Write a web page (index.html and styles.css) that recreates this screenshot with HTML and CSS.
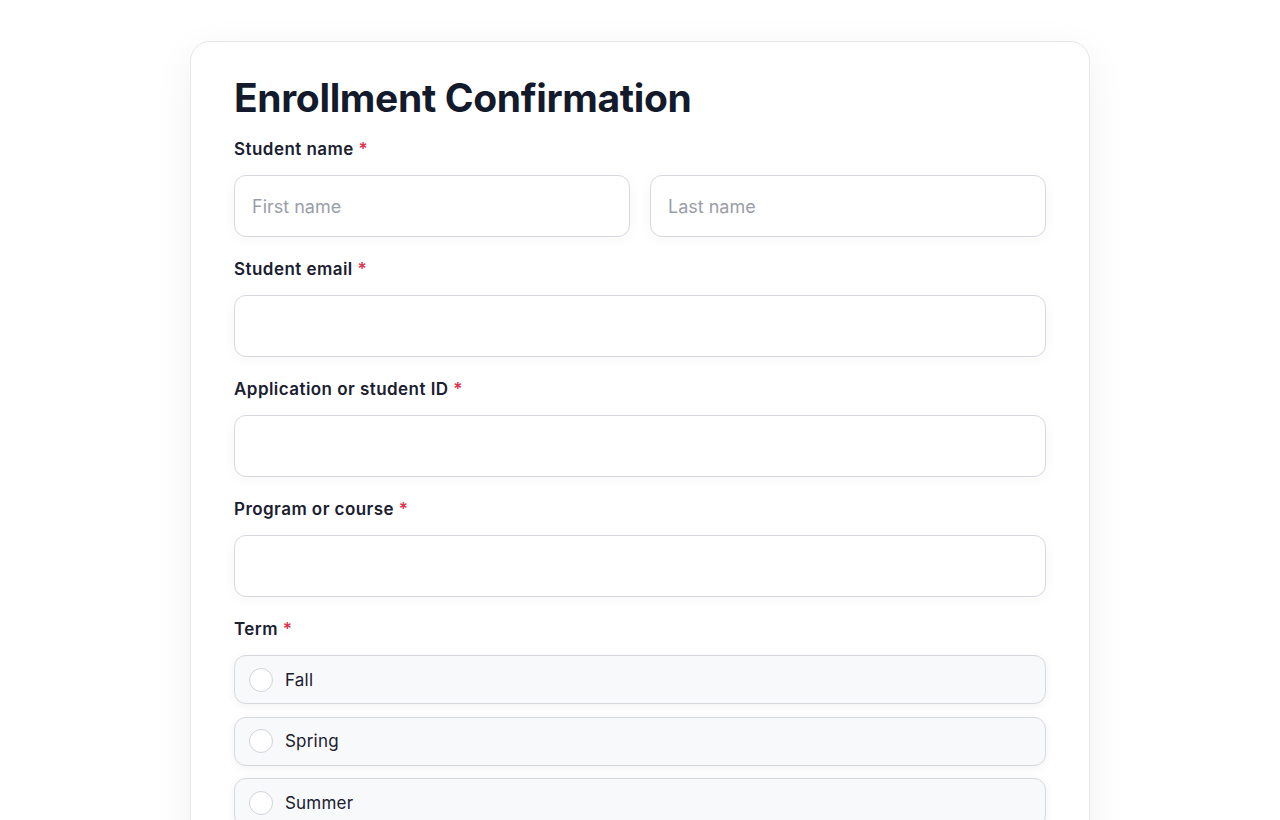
FILE: index.html
```html
<!DOCTYPE html>
<html>
<head>
    <meta charset="utf-8">
    <link rel="stylesheet" href="styles.css">
</head>
<body>
    <div class="card">
        <h1 class="title">Enrollment Confirmation</h1>

        <div class="field">
            <label class="label">Student name <span class="req">*</span></label>
            <div class="row">
                <input class="input" type="text" placeholder="First name">
                <input class="input" type="text" placeholder="Last name">
            </div>
        </div>

        <div class="field">
            <label class="label">Student email <span class="req">*</span></label>
            <input class="input" type="email">
        </div>

        <div class="field">
            <label class="label">Application or student ID <span class="req">*</span></label>
            <input class="input" type="text">
        </div>

        <div class="field">
            <label class="label">Program or course <span class="req">*</span></label>
            <input class="input" type="text">
        </div>

        <div class="field">
            <label class="label">Term <span class="req">*</span></label>
            <div class="options">
                <label class="option"><span class="radio"></span>Fall</label>
                <label class="option"><span class="radio"></span>Spring</label>
                <label class="option"><span class="radio"></span>Summer</label>
            </div>
        </div>
    </div>
</body>
</html>
```

FILE: styles.css
```css
* {
    box-sizing: border-box;
}

body {
    margin: 0;
    background: #ffffff;
    font-family: Inter, 'Noto Sans', 'Liberation Sans', sans-serif;
    color: #111827;
}

.card {
    width: 900px;
    margin: 41px auto 0;
    padding: 32px 43px 40px;
    background: #ffffff;
    border: 1px solid #e7e8ec;
    border-radius: 20px;
    box-shadow: 0 10px 40px rgba(17, 24, 39, 0.06);
}

.title {
    margin: 0 0 15px;
    font-size: 39px;
    line-height: 48px;
    font-weight: 700;
    color: #131a2b;
    letter-spacing: -0.35px;
}

.field {
    margin-bottom: 20px;
}

.label {
    display: block;
    font-size: 17px;
    line-height: 24px;
    font-weight: 600;
    color: #1a2030;
    letter-spacing: 0.45px;
    margin-bottom: 14px;
}

.req {
    color: #e0334d;
}

.row {
    display: flex;
    gap: 20px;
}

.input {
    display: block;
    width: 100%;
    height: 62px;
    padding: 0 17px;
    border: 1px solid #d6d8de;
    border-radius: 12px;
    background: #ffffff;
    font-family: inherit;
    font-size: 18px;
    color: #111827;
    box-shadow: 0 2px 14px rgba(17, 24, 39, 0.035);
    outline: none;
}

.input::placeholder {
    color: #9a9ea8;
}

.options {
    display: flex;
    flex-direction: column;
    gap: 12.5px;
}

.option {
    display: flex;
    align-items: center;
    gap: 12px;
    height: 49px;
    padding: 0 14px;
    background: #f8f9fb;
    border: 1px solid #d6d8de;
    border-radius: 12px;
    box-shadow: 0 2px 8px rgba(17, 24, 39, 0.06);
    font-size: 17px;
    letter-spacing: 0.2px;
    color: #1a2030;
}

.radio {
    width: 24px;
    height: 24px;
    border: 1px solid #d0d3da;
    border-radius: 50%;
    background: #ffffff;
    flex-shrink: 0;
}
```
